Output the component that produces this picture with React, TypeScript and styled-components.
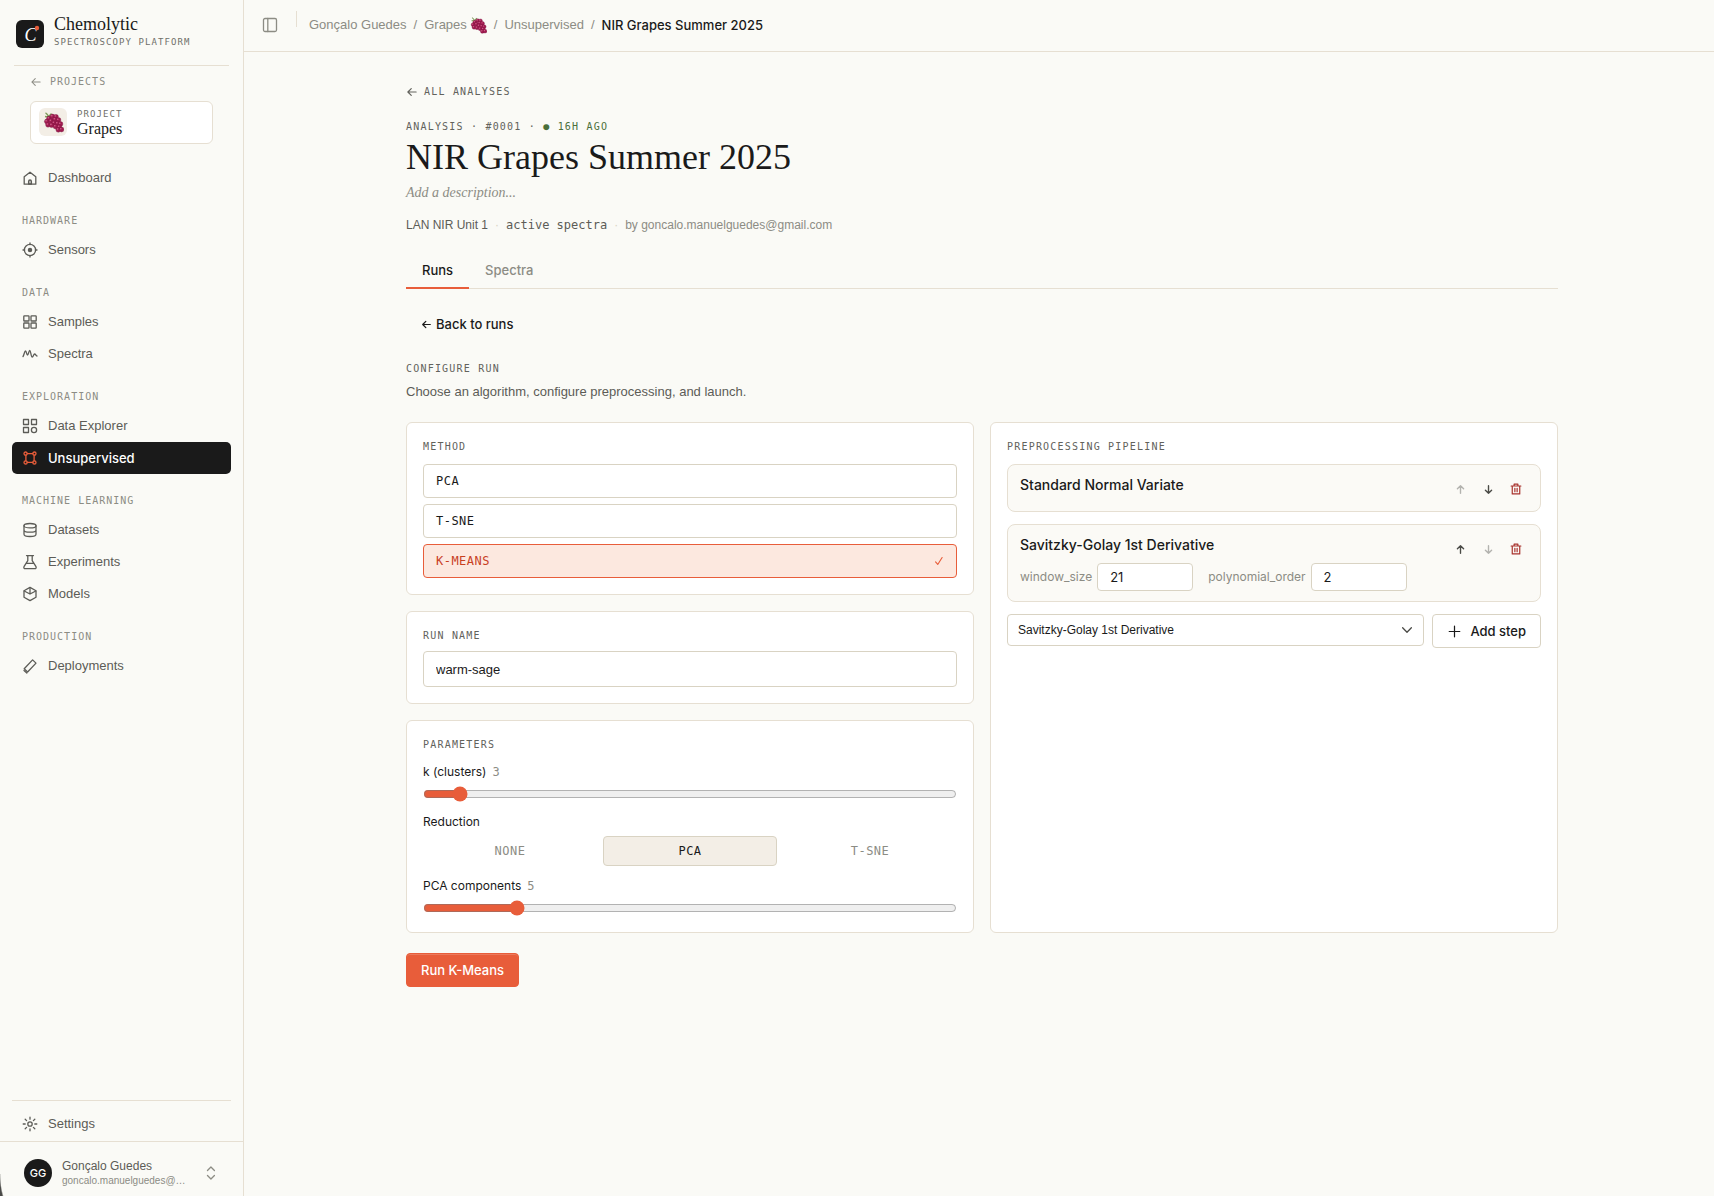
import React, { useState } from "react";
import styled, { createGlobalStyle, css } from "styled-components";

const ink = "#1a1a1a";
const body = "#5c5c57";
const muted = "#8c8c84";
const line = "#e6dfd2";
const field = "#d9d3c3";
const paper = "#fafaf6";
const accent = "#e85d3a";
const sans = `"Liberation Sans", Arial, sans-serif`;
const label = `Inter, "Liberation Sans", sans-serif`;
const serif = `"Liberation Serif", serif`;
const mono = `"DejaVu Sans Mono", "Liberation Mono", monospace`;

const medium = css`
  font-family: ${label};
  font-weight: 500;
`;

const Global = createGlobalStyle`
  *, *::before, *::after { box-sizing: border-box; }
  body { margin: 0; background: ${paper}; color: ${ink}; font: 13px/20px ${sans}; }
  button, input, select { font: inherit; color: inherit; }
  a { color: inherit; text-decoration: none; }
  h1, h2, p, ul, ol { margin: 0; padding: 0; font-weight: 400; }
  ul, ol { list-style: none; }
`;

const Shell = styled.div`
  display: grid;
  grid-template-columns: 244px minmax(0, 1fr);
  min-height: 100vh;
  &::after {
    content: "";
    position: fixed;
    left: 0;
    bottom: 0;
    width: 5px;
    height: 22px;
    background: radial-gradient(12px 34px at 12px 0, transparent 94%, #4a4a48 104%);
  }
`;

const Sidebar = styled.aside`
  position: sticky;
  top: 0;
  height: 100vh;
  display: flex;
  flex-direction: column;
  border-right: 1px solid ${line};
`;

const Brand = styled.div`
  display: flex;
  align-items: flex-end;
  gap: 10px;
  margin: 0 14px;
  padding: 13px 2px 17px;
  border-bottom: 1px solid ${line};
`;

const BrandName = styled.div`
  font: 18px/22px ${serif};
`;

const Tiny = styled.div<{ $lh: number }>`
  font: 9px/${(p) => p.$lh}px ${mono};
  letter-spacing: 0.12em;
  text-transform: uppercase;
  color: #70706a;
`;

const BrandText = styled.div`
  display: grid;
  gap: 1px;
  white-space: nowrap;
`;

const ProjectsLink = styled.a`
  display: flex;
  align-items: center;
  gap: 8px;
  margin: 9px 30px 12px;
  font: 10px/14px ${mono};
  letter-spacing: 0.1em;
  color: ${muted};
`;

const ProjectCard = styled.a`
  display: flex;
  gap: 10px;
  margin: 0 30px 18px;
  padding: 6px 8px 7px;
  background: #fff;
  border: 1px solid ${line};
  border-radius: 6px;
`;

const Tile = styled.span`
  display: grid;
  place-items: center;
  width: 28px;
  height: 28px;
  border-radius: 6px;
  background: #f3eee6;
`;

const ProjectName = styled.div`
  font: 16px/15px ${serif};
`;

const Nav = styled.nav`
  flex: 1;
  padding: 0 12px;
`;

const NavHeading = styled.h2`
  height: 40px;
  padding: 20px 10px 0;
  font: 10px/14px ${mono};
  letter-spacing: 0.1em;
  text-transform: uppercase;
  color: ${muted};
`;

const NavItem = styled.a<{ $active?: boolean }>`
  display: flex;
  align-items: center;
  gap: 10px;
  height: 32px;
  padding: 0 10px;
  border-radius: 5px;
  color: ${body};
  ${(p) =>
    p.$active &&
    css`
      ${medium}
      background: ${ink};
      color: #fff;
      svg { color: ${accent}; }
    `}
`;

const SettingsArea = styled.div`
  margin: 0 12px;
  padding: 7px 0 1px;
  border-top: 1px solid ${line};
`;

const Account = styled.button`
  display: flex;
  align-items: center;
  gap: 10px;
  padding: 16px 24px 8px;
  border: 0;
  border-top: 1px solid ${line};
  background: none;
  color: ${muted};
  text-align: left;
`;

const Avatar = styled.span`
  ${medium}
  display: grid;
  place-items: center;
  flex: none;
  width: 28px;
  height: 28px;
  border-radius: 50%;
  background: ${ink};
  color: #fff;
  font-size: 11px;
`;

const AccountText = styled.span`
  display: grid;
  width: 128px;
  margin-right: 4px;
`;

const AccountName = styled.span`
  font-size: 12px;
  line-height: 16px;
  color: ${body};
`;

const AccountMail = styled.span`
  white-space: nowrap;
  font-size: 10px;
  line-height: 14px;
`;

const Topbar = styled.header`
  display: flex;
  height: 52px;
  padding: 11px 18px;
  border-bottom: 1px solid ${line};
`;

const PanelButton = styled.button`
  display: grid;
  place-items: center;
  width: 16px;
  height: 28px;
  padding: 0;
  border: 0;
  background: none;
  color: ${muted};
`;

const Divider = styled.span`
  width: 1px;
  height: 16px;
  margin: 0 12px 0 18px;
  background: ${line};
`;

const Crumbs = styled.ol`
  display: flex;
  align-items: center;
  gap: 7px;
  height: 28px;
  color: ${muted};
`;

const Crumb = styled.li<{ $current?: boolean }>`
  display: flex;
  align-items: center;
  gap: 3px;
  color: ${(p) => (p.$current ? ink : muted)};
  ${(p) => p.$current && medium}
`;

const Page = styled.main`
  max-width: 1200px;
  margin: 0 auto;
  padding: 32px 21px 48px 27px;
`;

const Kicker = styled.div<{ $color?: string }>`
  display: flex;
  align-items: center;
  font: 10px/15px ${mono};
  letter-spacing: 0.12em;
  text-transform: uppercase;
  color: ${(p) => p.$color || "#62625c"};
  white-space: pre;
`;

const BackLink = styled.a`
  display: flex;
  align-items: center;
  gap: 6px;
  width: fit-content;
  margin-bottom: 20px;
  font: 10px/15px ${mono};
  letter-spacing: 0.12em;
  color: #62625c;
`;

const Title = styled.h1`
  font: 36px/40px ${serif};
  margin: 3px 0 6px;
`;

const Description = styled.p`
  font: italic 14px/20px ${serif};
  color: ${muted};
`;

const Meta = styled.div`
  display: flex;
  gap: 7px;
  margin-top: 12px;
  font-size: 12px;
  line-height: 20px;
  color: ${muted};
`;

const MetaStrong = styled.span<{ $mono?: boolean }>`
  color: ${body};
  font-family: ${(p) => (p.$mono ? mono : sans)};
`;

const Dot = styled.span`
  color: ${field};
`;

const Tabs = styled.div`
  display: flex;
  margin-top: 16px;
  border-bottom: 1px solid ${line};
`;

const Tab = styled.button<{ $active?: boolean }>`
  ${medium}
  height: 38px;
  margin-bottom: -1px;
  padding: 1px 16px 0;
  border: 0;
  border-bottom: 2px solid ${(p) => (p.$active ? accent : "transparent")};
  background: none;
  color: ${(p) => (p.$active ? ink : muted)};
`;

const GhostButton = styled.button`
  ${medium}
  display: flex;
  align-items: center;
  gap: 4px;
  height: 34px;
  margin: 18px 0 20px;
  padding: 0 15px;
  border: 0;
  background: none;
`;

const Lead = styled.p`
  margin: 6px 0 20px;
  color: ${body};
`;

const Columns = styled.div`
  display: grid;
  grid-template-columns: 1fr 1fr;
  gap: 16px;
`;

const Stack = styled.div<{ $gap: number }>`
  display: grid;
  gap: ${(p) => p.$gap}px;
`;

const Card = styled.section`
  padding: 16px;
  border: 1px solid ${line};
  border-radius: 6px;
  background: #fff;
`;

const CardTitle = styled.h2<{ $gap: number }>`
  margin-bottom: ${(p) => p.$gap}px;
  font: 10px/15px ${mono};
  letter-spacing: 0.12em;
  text-transform: uppercase;
  color: #62625c;
`;

const MethodButton = styled.button<{ $active: boolean }>`
  display: flex;
  align-items: center;
  justify-content: space-between;
  width: 100%;
  height: 34px;
  padding: 0 12px;
  border: 1px solid ${(p) => (p.$active ? accent : field)};
  border-radius: 4px;
  background: ${(p) => (p.$active ? "#fce8df" : "#fff")};
  color: ${(p) => (p.$active ? "#c8401f" : ink)};
  font: 12px/18px ${mono};
  letter-spacing: 0.04em;
  svg { color: ${accent}; }
`;

const TextInput = styled.input<{ $small?: boolean }>`
  width: ${(p) => (p.$small ? "96px" : "100%")};
  height: ${(p) => (p.$small ? "28px" : "36px")};
  padding: 0 12px;
  border: 1px solid ${field};
  border-radius: 4px;
  background: #fff;
`;

const Label = styled.label`
  display: flex;
  gap: 6px;
  font-family: ${label};
  font-size: 12px;
  line-height: 16px;
`;

const Value = styled.output`
  font-family: ${mono};
  color: ${muted};
`;

const Range = styled.input`
  display: block;
  width: 100%;
  height: 16px;
  margin: 0;
  accent-color: ${accent};
`;

const Segments = styled.div`
  display: grid;
  grid-template-columns: repeat(3, 1fr);
  gap: 6px;
`;

const Segment = styled.button<{ $active: boolean }>`
  height: 30px;
  border: 1px solid ${(p) => (p.$active ? field : "transparent")};
  border-radius: 4px;
  background: ${(p) => (p.$active ? "#f3eee6" : "transparent")};
  color: ${(p) => (p.$active ? ink : muted)};
  font: 12px/18px ${mono};
  letter-spacing: 0.04em;
`;

const Step = styled.li`
  display: flex;
  justify-content: space-between;
  padding: 10px 12px;
  border: 1px solid ${line};
  border-radius: 8px;
  background: #fbfaf6;
`;

const StepName = styled.div`
  ${medium}
  font-size: 14px;
  line-height: 20px;
`;

const StepFields = styled.div`
  display: flex;
  gap: 15px;
  margin-top: 8px;
`;

const StepField = styled.label`
  display: flex;
  align-items: center;
  gap: 5px;
  font-family: ${label};
  font-size: 12px;
  color: ${muted};
  input { color: ${ink}; font-size: 13px; }
`;

const Actions = styled.div`
  display: flex;
  gap: 4px;
  padding-top: 2px;
`;

const IconButton = styled.button<{ $danger?: boolean }>`
  display: grid;
  place-items: center;
  width: 24px;
  height: 24px;
  padding: 0;
  border: 0;
  background: none;
  color: ${(p) => (p.$danger ? "#a8322d" : "#4a4a46")};
  &:disabled { opacity: 0.4; }
`;

const AddRow = styled.div`
  display: flex;
  align-items: flex-start;
  gap: 8px;
  margin-top: 12px;
`;

const SelectBox = styled.div`
  display: grid;
  flex: 1;
  align-items: center;
  svg {
    grid-area: 1 / 1;
    justify-self: end;
    margin-right: 10px;
    color: #4a4a46;
    pointer-events: none;
  }
`;

const Select = styled.select`
  grid-area: 1 / 1;
  appearance: none;
  height: 32px;
  padding: 0 30px 0 10px;
  border: 1px solid ${field};
  border-radius: 4px;
  background: #fff;
  font-size: 12px;
`;

const AddButton = styled.button`
  ${medium}
  display: flex;
  align-items: center;
  gap: 9px;
  height: 34px;
  padding: 0 14px;
  padding-left: 15px;
  border: 1px solid ${field};
  border-radius: 4px;
  background: #fff;
`;

const RunButton = styled.button`
  ${medium}
  height: 34px;
  margin-top: 20px;
  padding: 0 14px;
  border: 1px solid ${accent};
  border-radius: 4px;
  background: ${accent};
  box-shadow: inset 0 1px 0 rgba(255, 255, 255, 0.18);
  color: #fff;
`;

const Icon = ({ children, size = 16, sw = 1.3 }: { children: React.ReactNode; size?: number; sw?: number }) => (
  <svg width={size} height={size} viewBox="0 0 16 16" fill="none" stroke="currentColor" strokeWidth={sw} strokeLinecap="round" strokeLinejoin="round" aria-hidden="true">
    {children}
  </svg>
);

const icons = {
  home: <><path d="M2.200 6.800 8 2.200l5.800 4.600v7.400H2.200z" /><path d="M6.600 14v-2.600a1.400 1.400 0 0 1 2.800 0V14z" fill="currentColor" fillOpacity=".3" /></>,
  sensor: <><circle cx="8" cy="8" r="5.600" /><circle cx="8" cy="8" r="1.600" fill="currentColor" /><path d="M8 1v1.600M8 13.400V15M1 8h1.600M13.400 8H15" /></>,
  samples: <><rect x="1.800" y="1.800" width="5.200" height="5.200" rx=".6" /><rect x="9" y="1.800" width="5.200" height="5.200" rx=".6" /><rect x="1.800" y="9" width="5.200" height="5.200" rx=".6" /><rect x="9" y="9" width="5.200" height="5.200" rx=".6" /></>,
  spectra: <path d="M1 10.500C2.200 9 2.400 5 3.500 5s1 4 2 4 1.300-4.500 2.300-4.500S9 11 10.200 11s1.300-3 2.400-3 1.200 2 2.400 2" />,
  explorer: <><rect x="1.500" y="1.500" width="5" height="5" /><rect x="9.500" y="1.500" width="5" height="5" /><rect x="1.500" y="9.500" width="5" height="5" /><circle cx="12" cy="12" r="2.600" /></>,
  cluster: <><circle cx="3.600" cy="3.600" r="1.600" /><circle cx="12.400" cy="3.600" r="1.600" /><circle cx="3.600" cy="12.400" r="1.600" /><circle cx="12.400" cy="12.400" r="1.600" /><path d="M5.200 3.600h5.600M5.200 12.400h5.600M3.900 5.200v5.600M12.100 5.200v5.600" /></>,
  database: <><ellipse cx="8" cy="3.700" rx="6" ry="2.200" /><path d="M2 3.700v8.600c0 1.200 2.700 2.200 6 2.200s6-1 6-2.200V3.700M2 8c0 1.200 2.700 2.200 6 2.200S14 9.200 14 8" /></>,
  flask: <path d="M4.500 1.600h7M5.800 1.600v5L2 12.700c-.5 1 .1 1.900 1.200 1.900h9.600c1.100 0 1.700-.9 1.200-1.900l-3.800-6.100v-5M4.300 9.400h7.400" />,
  cube: <><path d="M8 1.400 14 4.700v6.600L8 14.600 2 11.300V4.700z" /><path d="M2.200 5 8 8l5.800-3M8 1.600V8" /></>,
  deploy: <><path d="m2.200 10.800 8.400-8.900 3.400 3.200-8.400 8.900z" /><path d="M2 12.500 4.800 15" /></>,
  gear: <><circle cx="8" cy="8" r="2.200" /><path d="M8 1.200v2M8 12.800v2M1.200 8h2M12.800 8h2M3.200 3.200l1.400 1.400M11.400 11.400l1.400 1.400M3.200 12.800l1.400-1.400M11.400 4.600l1.400-1.400" /></>,
  left: <path d="M13.500 8h-11M7 3.500 2.500 8 7 12.500" />,
  up: <path d="M8 13.500v-11M3.500 7 8 2.500 12.500 7" />,
  down: <path d="M8 2.500v11M3.500 9 8 13.500 12.500 9" />,
  trash: <path d="M1.500 4h13M5.500 4V1.500h5V4M3 4v10.500h10V4M6.500 7v4.500M9.500 7v4.500" />,
  plus: <path d="M8 1.500v13M1.500 8h13" />,
  check: <path d="M2.500 9.500 6 13.500 13 2.500" />,
  chevron: <path d="m3 5.500 5 5 5-5" />,
  updown: <path d="m4.500 5.500 3.500-3.500 3.500 3.500M4.500 10.500 8 14l3.500-3.500" />,
  panel: <><rect x="1.500" y="1.500" width="13" height="13" rx="1.500" /><path d="M5.800 1.500v13" /></>,
};

const berries: [number, number][] = [
  [6, 6.500], [9.500, 4.500], [3.800, 9.500], [13, 4.800], [8, 9], [12, 7.500], [5, 12.800], [15.500, 8],
  [11, 11], [8.600, 13.200], [14.500, 11.500], [17.500, 12], [12.500, 14.500], [16.300, 15], [15.300, 17.800], [18.500, 17.500],
];

const Grapes = ({ size }: { size: number }) => (
  <svg width={size} height={size} viewBox="0 0 21 21" role="img" aria-label="Grapes">
    <path d="M2.500 0.800C4 1.500 5 3 6 5.500M2 4.500 5.500 5M6 4l2.500-2.500" stroke="#7c9a58" strokeWidth="1.300" fill="none" />
    {berries.map(([x, y]) => (
      <g key={`${x}-${y}`}>
        <circle cx={x} cy={y} r="2.400" fill="#a01c50" stroke="#7a1440" strokeWidth=".4" />
        <circle cx={x - 0.700} cy={y - 0.800} r=".8" fill="#d4608c" />
      </g>
    ))}
  </svg>
);

const Logo = () => (
  <svg width="28" height="28" viewBox="0 0 28 28" aria-hidden="true">
    <rect width="28" height="28" rx="6" fill={ink} />
    <text x="8.500" y="20.500" fontFamily="Liberation Serif, serif" fontStyle="italic" fontSize="18" fill="#fff">C</text>
    <circle cx="21" cy="8" r="2.200" fill={accent} />
  </svg>
);

type IconName = keyof typeof icons;
const navGroups: { title?: string; items: [string, IconName][] }[] = [
  { items: [["Dashboard", "home"]] },
  { title: "Hardware", items: [["Sensors", "sensor"]] },
  { title: "Data", items: [["Samples", "samples"], ["Spectra", "spectra"]] },
  { title: "Exploration", items: [["Data Explorer", "explorer"], ["Unsupervised", "cluster"]] },
  { title: "Machine learning", items: [["Datasets", "database"], ["Experiments", "flask"], ["Models", "cube"]] },
  { title: "Production", items: [["Deployments", "deploy"]] },
];

const steps = [
  { name: "Standard Normal Variate", fields: [] as [string, number][] },
  { name: "Savitzky-Golay 1st Derivative", fields: [["window_size", 21], ["polynomial_order", 2]] as [string, number][] },
];

export default function App() {
  const [method, setMethod] = useState("K-MEANS");
  const [reduction, setReduction] = useState("PCA");
  const [k, setK] = useState(3);
  const [components, setComponents] = useState(5);

  return (
    <>
      <Global />
      <Shell>
        <Sidebar>
          <Brand>
            <Logo />
            <BrandText>
              <BrandName>Chemolytic</BrandName>
              <Tiny $lh={12}>Spectroscopy platform</Tiny>
            </BrandText>
          </Brand>
          <ProjectsLink href="#"><Icon size={12} sw={1.4}>{icons.left}</Icon>PROJECTS</ProjectsLink>
          <ProjectCard href="#">
            <Tile><Grapes size={21} /></Tile>
            <div>
              <Tiny $lh={13}>Project</Tiny>
              <ProjectName>Grapes</ProjectName>
            </div>
          </ProjectCard>
          <Nav>
            {navGroups.map((group) => (
              <div key={group.title || "top"}>
                {group.title && <NavHeading>{group.title}</NavHeading>}
                {group.items.map(([name, icon]) => (
                  <NavItem key={name} href="#" $active={name === "Unsupervised"}>
                    <Icon>{icons[icon]}</Icon>
                    {name}
                  </NavItem>
                ))}
              </div>
            ))}
          </Nav>
          <SettingsArea>
            <NavItem href="#"><Icon>{icons.gear}</Icon>Settings</NavItem>
          </SettingsArea>
          <Account>
            <Avatar>GG</Avatar>
            <AccountText>
              <AccountName>Gonçalo Guedes</AccountName>
              <AccountMail>goncalo.manuelguedes@…</AccountMail>
            </AccountText>
            <Icon>{icons.updown}</Icon>
          </Account>
        </Sidebar>
        <div>
          <Topbar>
            <PanelButton aria-label="Toggle sidebar"><Icon>{icons.panel}</Icon></PanelButton>
            <Divider />
            <Crumbs>
              <Crumb><a href="#">Gonçalo Guedes</a></Crumb>
              <li>/</li>
              <Crumb><a href="#">Grapes</a><Grapes size={17} /></Crumb>
              <li>/</li>
              <Crumb><a href="#">Unsupervised</a></Crumb>
              <li>/</li>
              <Crumb $current>NIR Grapes Summer 2025</Crumb>
            </Crumbs>
          </Topbar>
          <Page>
            <BackLink href="#"><Icon size={12} sw={1.6}>{icons.left}</Icon>ALL ANALYSES</BackLink>
            <Kicker>{"Analysis · #0001 · "}<Kicker as="span" $color="#4a6f3a">● 16h ago</Kicker></Kicker>
            <Title>NIR Grapes Summer 2025</Title>
            <Description>Add a description...</Description>
            <Meta>
              <MetaStrong>LAN NIR Unit 1</MetaStrong>
              <Dot>·</Dot>
              <MetaStrong $mono>active spectra</MetaStrong>
              <Dot>·</Dot>
              <span>by goncalo.manuelguedes@gmail.com</span>
            </Meta>
            <Tabs role="tablist">
              <Tab role="tab" aria-selected $active>Runs</Tab>
              <Tab role="tab" aria-selected={false}>Spectra</Tab>
            </Tabs>
            <GhostButton><Icon size={11} sw={1.8}>{icons.left}</Icon>Back to runs</GhostButton>
            <Kicker>Configure run</Kicker>
            <Lead>Choose an algorithm, configure preprocessing, and launch.</Lead>
            <Columns>
              <Stack $gap={16}>
                <Card>
                  <CardTitle $gap={10}>Method</CardTitle>
                  <Stack $gap={6}>
                    {["PCA", "T-SNE", "K-MEANS"].map((m) => (
                      <MethodButton key={m} $active={m === method} onClick={() => setMethod(m)}>
                        {m}
                        {m === method && <Icon size={10} sw={1.8}>{icons.check}</Icon>}
                      </MethodButton>
                    ))}
                  </Stack>
                </Card>
                <Card>
                  <CardTitle $gap={8}><label htmlFor="run-name">Run name</label></CardTitle>
                  <TextInput id="run-name" defaultValue="warm-sage" />
                </Card>
                <Card>
                  <CardTitle $gap={12}>Parameters</CardTitle>
                  <Stack $gap={12}>
                    <Stack $gap={6}>
                      <Label htmlFor="k">k (clusters) <Value>{k}</Value></Label>
                      <Range id="k" type="range" min={2} max={20} value={k} onChange={(e) => setK(+e.target.value)} />
                    </Stack>
                    <Stack $gap={6}>
                      <Label as="div" id="reduction">Reduction</Label>
                      <Segments role="group" aria-labelledby="reduction">
                        {["NONE", "PCA", "T-SNE"].map((r) => (
                          <Segment key={r} $active={r === reduction} onClick={() => setReduction(r)}>{r}</Segment>
                        ))}
                      </Segments>
                    </Stack>
                    <Stack $gap={6}>
                      <Label htmlFor="components">PCA components <Value>{components}</Value></Label>
                      <Range id="components" type="range" min={2} max={20} value={components} onChange={(e) => setComponents(+e.target.value)} />
                    </Stack>
                  </Stack>
                </Card>
              </Stack>
              <Card>
                <CardTitle $gap={10}>Preprocessing pipeline</CardTitle>
                <Stack as="ul" $gap={12}>
                  {steps.map((step, i) => (
                    <Step key={step.name}>
                      <div>
                        <StepName>{step.name}</StepName>
                        {step.fields.length > 0 && (
                          <StepFields>
                            {step.fields.map(([name, value]) => (
                              <StepField key={name}>{name}<TextInput $small defaultValue={value} /></StepField>
                            ))}
                          </StepFields>
                        )}
                      </div>
                      <Actions>
                        <IconButton aria-label="Move up" disabled={i === 0}><Icon size={11} sw={2}>{icons.up}</Icon></IconButton>
                        <IconButton aria-label="Move down" disabled={i === steps.length - 1}><Icon size={11} sw={2}>{icons.down}</Icon></IconButton>
                        <IconButton aria-label="Remove step" $danger><Icon size={12} sw={1.6}>{icons.trash}</Icon></IconButton>
                      </Actions>
                    </Step>
                  ))}
                </Stack>
                <AddRow>
                  <SelectBox>
                    <Select aria-label="Preprocessing step" defaultValue="Savitzky-Golay 1st Derivative">
                      <option>Standard Normal Variate</option>
                      <option>Savitzky-Golay 1st Derivative</option>
                    </Select>
                    <Icon size={14} sw={1.5}>{icons.chevron}</Icon>
                  </SelectBox>
                  <AddButton><Icon size={13} sw={1.5}>{icons.plus}</Icon>Add step</AddButton>
                </AddRow>
              </Card>
            </Columns>
            <RunButton>Run K-Means</RunButton>
          </Page>
        </div>
      </Shell>
    </>
  );
}
